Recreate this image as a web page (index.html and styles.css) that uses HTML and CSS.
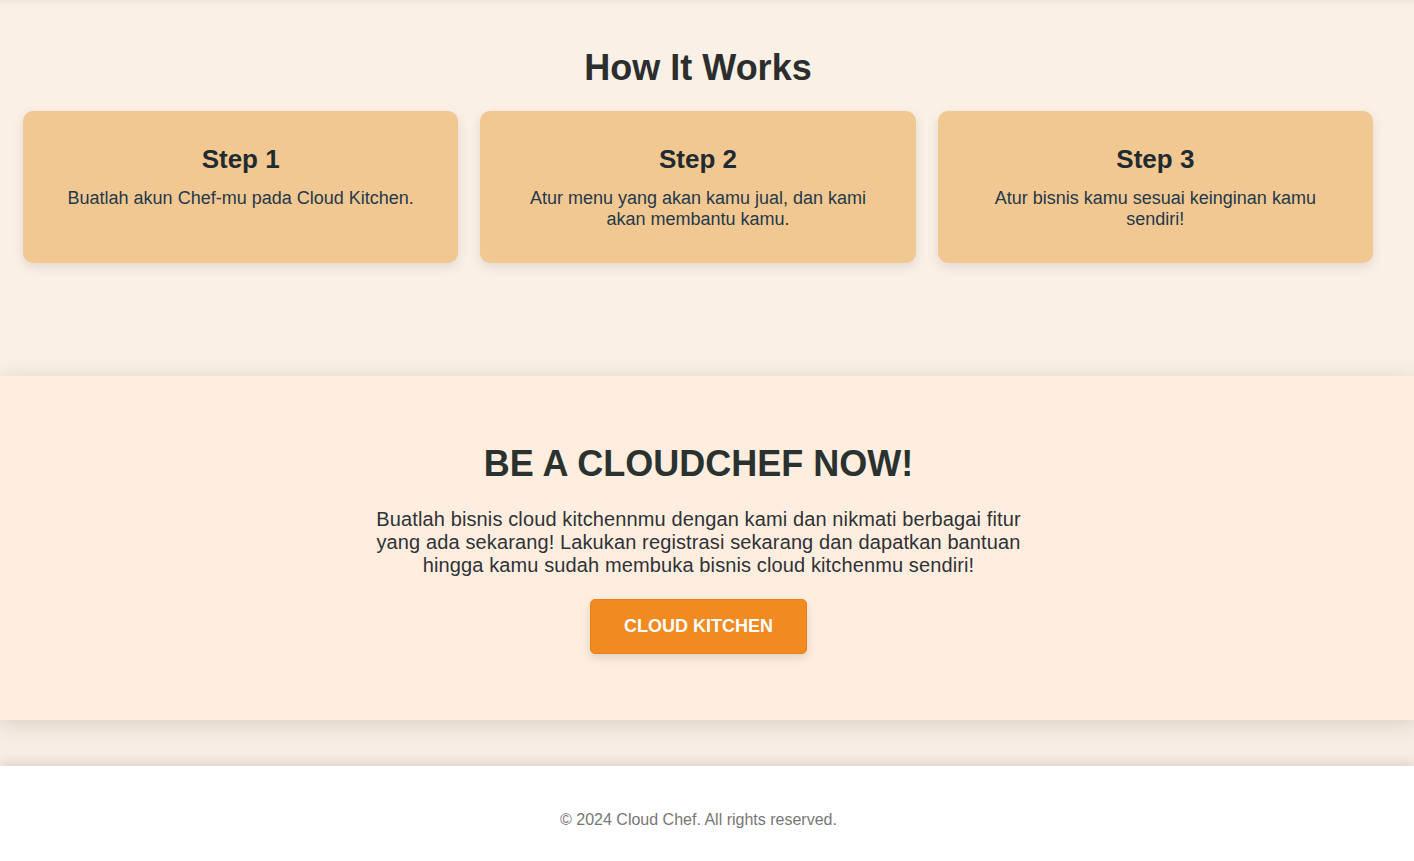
FILE: index.html
```html
<!DOCTYPE html>
<html lang="id">
<head>
<meta charset="utf-8">
<title>Cloud Chef</title>
<link rel="stylesheet" href="styles.css">
</head>
<body>
<main class="page">
  <section class="how">
    <h2 class="how-title">How It Works</h2>
    <div class="steps">
      <div class="step-card">
        <h3 class="step-title">Step 1</h3>
        <p class="step-text">Buatlah akun Chef-mu pada Cloud Kitchen.</p>
      </div>
      <div class="step-card">
        <h3 class="step-title">Step 2</h3>
        <p class="step-text">Atur menu yang akan kamu jual, dan kami akan membantu kamu.</p>
      </div>
      <div class="step-card">
        <h3 class="step-title">Step 3</h3>
        <p class="step-text">Atur bisnis kamu sesuai keinginan kamu sendiri!</p>
      </div>
    </div>
  </section>

  <section class="cta">
    <h2 class="cta-title">BE A CLOUDCHEF NOW!</h2>
    <p class="cta-text">Buatlah bisnis cloud kitchennmu dengan kami dan nikmati berbagai fitur yang ada sekarang! Lakukan registrasi sekarang dan dapatkan bantuan hingga kamu sudah membuka bisnis cloud kitchenmu sendiri!</p>
    <a class="cta-button" href="#">CLOUD KITCHEN</a>
  </section>

  <div class="spacer"></div>

  <footer class="footer">
    <p class="footer-text">© 2024 Cloud Chef. All rights reserved.</p>
  </footer>
</main>
</body>
</html>
```

FILE: styles.css
```css
* {
  box-sizing: border-box;
}

html, body {
  margin: 0;
  padding: 0;
}

body {
  font-family: "Liberation Sans", Arial, sans-serif;
  background: #f7ede5;
  color: #333;
}

.page {
  display: flex;
  flex-direction: column;
}

.how {
  background: #faf0e6;
  padding: 47px 41px 113px 23px;
  box-shadow: inset 0 5px 5px -3px rgba(0, 0, 0, 0.05);
}

.how-title {
  margin: 0 0 22px;
  text-align: center;
  font-size: 36px;
  font-weight: bold;
  color: #2b2e2d;
}

.steps {
  display: grid;
  grid-template-columns: repeat(3, 1fr);
  gap: 22px;
}

.step-card {
  background: #f2c892;
  border-radius: 10px;
  padding: 33px 40px 33px;
  text-align: center;
  box-shadow: 0 4px 12px rgba(0, 0, 0, 0.1);
}

.step-title {
  margin: 0 0 13px;
  font-size: 26px;
  font-weight: bold;
  color: #1f2b30;
}

.step-text {
  margin: 0;
  font-size: 18px;
  color: #24394a;
}

.cta {
  position: relative;
  z-index: 1;
  background: #ffeedf;
  padding: 67px 17px 66px 0;
  display: flex;
  flex-direction: column;
  align-items: center;
  text-align: center;
  box-shadow: 0 3px 20px rgba(90, 60, 30, 0.18);
}

.cta-title {
  margin: 0 0 23px;
  font-size: 36px;
  font-weight: bold;
  color: #2a3230;
}

.cta-text {
  margin: 0 0 22px;
  max-width: 660px;
  font-size: 20px;
  line-height: 23px;
  letter-spacing: 0.12px;
  color: #2f3236;
}

.cta-button {
  display: inline-block;
  padding: 16px 33px;
  background: #f28a22;
  border: 1px solid #e8801c;
  border-radius: 5px;
  color: #fff;
  font-size: 18px;
  font-weight: bold;
  text-decoration: none;
  box-shadow: 0 4px 10px rgba(0, 0, 0, 0.12);
}

.spacer {
  height: 46px;
}

.footer {
  position: relative;
  background: #ffffff;
  padding: 45px 17px 44px 0;
  text-align: center;
  box-shadow: 0 -3px 10px rgba(90, 60, 30, 0.15);
}

.footer-text {
  margin: 0;
  font-size: 16px;
  color: #777;
}
```
